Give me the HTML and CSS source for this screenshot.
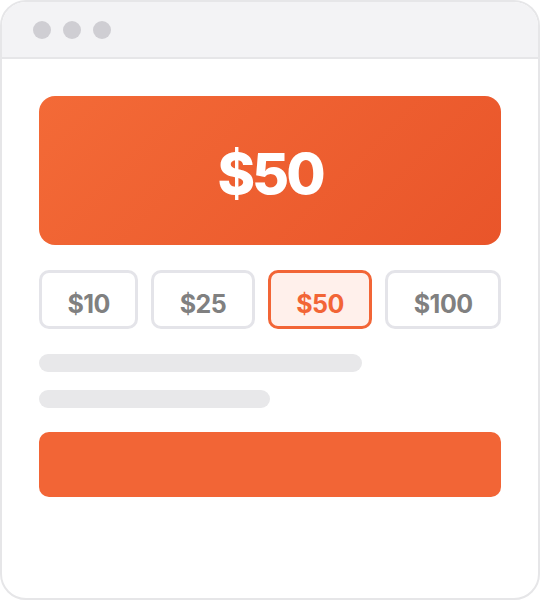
FILE: index.html
```html
<!DOCTYPE html>
<html>
<head>
<meta charset="utf-8">
<link rel="stylesheet" href="styles.css">
</head>
<body>
<div class="window">
  <div class="titlebar">
    <span class="dot"></span><span class="dot"></span><span class="dot"></span>
  </div>
  <div class="content">
    <div class="hero">$50</div>
    <div class="amounts">
      <div class="amount">$10</div>
      <div class="amount">$25</div>
      <div class="amount selected">$50</div>
      <div class="amount">$100</div>
    </div>
    <div class="bar bar-long"></div>
    <div class="bar bar-short"></div>
    <div class="cta"></div>
  </div>
</div>
</body>
</html>
```
FILE: styles.css
```css
html, body { margin: 0; padding: 0; background: #fff; }
body { font-family: Inter, "Noto Sans", sans-serif; }
.window {
  width: 540px;
  height: 600px;
  box-sizing: border-box;
  border: 2px solid #e6e6e8;
  border-radius: 26px;
  overflow: hidden;
  background: #fff;
}
.titlebar {
  height: 55px;
  background: #f3f3f5;
  border-bottom: 2px solid #e6e6e8;
  display: flex;
  align-items: center;
  gap: 12px;
  padding-left: 31px;
  box-sizing: content-box;
}
.dot {
  width: 18px;
  height: 18px;
  border-radius: 50%;
  background: #cfced3;
}
.content {
  padding: 37px 37px 0 37px;
}
.hero {
  height: 149px;
  box-sizing: border-box;
  padding-top: 6px;
  border-radius: 16px;
  background: linear-gradient(135deg, #f36a37 0%, #e9552a 100%);
  color: #fff;
  font-size: 57px;
  font-weight: 800;
  display: flex;
  align-items: center;
  justify-content: center;
  letter-spacing: -3px;
}
.amounts {
  display: flex;
  gap: 13px;
  margin-top: 25px;
}
.amount {
  flex: 1 1 auto;
  height: 59px;
  box-sizing: border-box;
  border: 3px solid #e4e4e9;
  border-radius: 10px;
  display: flex;
  align-items: center;
  justify-content: center;
  font-size: 25px;
  font-weight: 700;
  letter-spacing: -0.5px;
  color: #808080;
  padding: 9px 24px 0 24px;
}
.amount.selected {
  border-color: #f26536;
  background: #fff0eb;
  color: #f26536;
}
.bar {
  height: 18px;
  border-radius: 9px;
  background: #e8e8ea;
}
.bar-long { width: 323px; margin-top: 25px; }
.bar-short { width: 231px; margin-top: 18px; }
.cta {
  height: 65px;
  margin-top: 24px;
  border-radius: 10px;
  background: #f26536;
}
```
